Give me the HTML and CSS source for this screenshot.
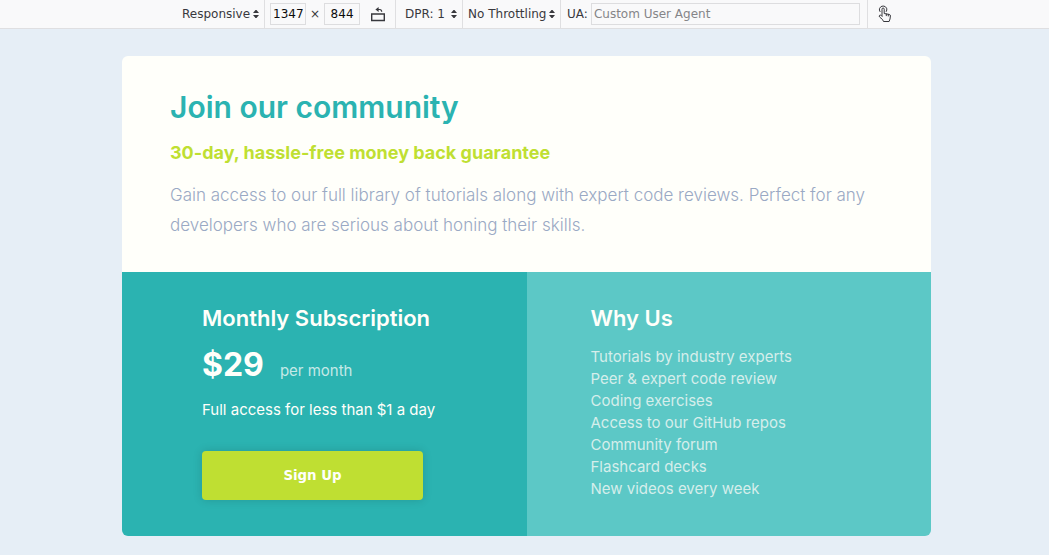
FILE: index.html
```html
<!DOCTYPE html>
<html lang="en">
<head>
<meta charset="utf-8">
<meta name="viewport" content="width=device-width, initial-scale=1">
<title>Join our community</title>
<link rel="stylesheet" href="styles.css">
</head>
<body>
<header class="toolbar">
  <div class="group device">
    <select class="picker picker-device" aria-label="Device"><option>Responsive</option></select>
    <svg class="arrows" viewBox="0 0 6 8" aria-hidden="true"><path d="M0 3 2.500 0h1L6 3zM0 5l2.500 3h1L6 5z"/></svg>
  </div>
  <div class="group size">
    <input class="field dimension" aria-label="Width" value="1347">
    <span class="times">×</span>
    <input class="field dimension" aria-label="Height" value="844">
    <button class="icon-button rotate" aria-label="Rotate viewport">
      <svg width="16" height="16" viewBox="0 0 16 16" fill="none" stroke="#38383d"><path d="M1.700 8h12.600v6.500H1.700z" stroke-width="1.400"/><path d="M7 3.500h2.700q2 0 2 2.300" stroke-width="1.200"/><path d="M8.600 1v5L5.400 3.500z" fill="#38383d" stroke="none"/></svg>
    </button>
  </div>
  <div class="group ratio">
    <select class="picker picker-ratio" aria-label="Device pixel ratio"><option>DPR: 1</option></select>
    <svg class="arrows" viewBox="0 0 6 8" aria-hidden="true"><path d="M0 3 2.500 0h1L6 3zM0 5l2.500 3h1L6 5z"/></svg>
  </div>
  <div class="group network">
    <select class="picker picker-network" aria-label="Throttling"><option>No Throttling</option></select>
    <svg class="arrows" viewBox="0 0 6 8" aria-hidden="true"><path d="M0 3 2.500 0h1L6 3zM0 5l2.500 3h1L6 5z"/></svg>
  </div>
  <div class="group agent">
    <label for="agent">UA:</label>
    <input class="field agent-field" id="agent" placeholder="Custom User Agent">
  </div>
  <div class="group touch">
    <button class="icon-button" aria-label="Touch simulation">
      <svg width="16" height="18" viewBox="0 0 16 18" fill="none" stroke="#38383d" stroke-linecap="round" stroke-linejoin="round"><path d="M5 11V4.200q0-1.200 1.100-1.200t1.100 1.200V8.500l5 .9q1.300.3 1.200 1.600l-.4 3-.9 2.500H6.500L5.500 14.500 2.600 12q-.9-1 0-1.700.9-.5 1.700.2L5 11.200M9.300 9v1.700M11.300 9.400v1.600"/><path d="M3 6.600Q1.900 5 2.600 3.300 3.700 1 6.100 1t3.500 2.200q.7 1.700-.3 3.300"/></svg>
    </button>
  </div>
</header>
<main class="card">
  <section class="intro">
    <h1 class="title">Join our community</h1>
    <h2 class="guarantee">30-day, hassle-free money back guarantee</h2>
    <p class="summary">Gain access to our full library of tutorials along with expert code reviews. Perfect for any developers who are serious about honing their skills.</p>
  </section>
  <div class="details">
    <section class="plan">
      <h2 class="heading">Monthly Subscription</h2>
      <p class="price"><strong class="amount">$29</strong><span class="period">per month</span></p>
      <p class="note">Full access for less than $1 a day</p>
      <button class="signup">Sign Up</button>
    </section>
    <section class="reasons">
      <h2 class="heading">Why Us</h2>
      <ul class="list">
        <li>Tutorials by industry experts</li>
        <li>Peer &amp; expert code review</li>
        <li>Coding exercises</li>
        <li>Access to our GitHub repos</li>
        <li>Community forum</li>
        <li>Flashcard decks</li>
        <li>New videos every week</li>
      </ul>
    </section>
  </div>
</main>
</body>
</html>
```
FILE: styles.css
```css
* {
  box-sizing: border-box;
}

body {
  margin: 0;
  background: #e6eef6;
  font-family: Inter, Roboto, sans-serif;
}

h1, h2, p, ul {
  margin: 0;
  padding: 0;
}

.toolbar {
  display: flex;
  justify-content: center;
  height: 29px;
  padding-right: 151px;
  padding-left: 177px;
  background: #f9f9fa;
  border-bottom: 1px solid #dfdfe1;
  color: #38383d;
  font: 12px/16px "DejaVu Sans", sans-serif;
}

.group {
  display: flex;
  flex: none;
  align-items: center;
  padding: 0 5px;
  border-right: 1px solid #dfdfe1;
}

.group.agent {
  flex: 1;
  gap: 3px;
  padding-right: 7px;
  padding-left: 6px;
}

.group.touch {
  border-right: 0;
}

.size {
  gap: 4px;
}

.group.ratio {
  padding-left: 9px;
}

.picker {
  appearance: none;
  margin: 0;
  padding: 0;
  border: 0;
  background: none;
  color: inherit;
  font: inherit;
}

.picker-device {
  width: 71px;
}

.picker-ratio {
  width: 46px;
}

.picker-network {
  width: 81px;
}

.arrows {
  width: 6px;
  height: 8px;
  fill: #38383d;
  pointer-events: none;
}

.field {
  height: 22px;
  min-width: 0;
  padding: 0 2px;
  border: 1px solid #dddddf;
  background: #f9f9fa;
  color: #0c0c0d;
  font: inherit;
}

.field::placeholder {
  color: #858588;
}

.dimension {
  width: 36px;
  text-align: center;
}

.agent-field {
  flex: 1;
}

.icon-button {
  display: flex;
  padding: 0;
  border: 0;
  background: none;
}

.rotate {
  margin: 0 4px 0 6px;
}

.touch .icon-button {
  margin-left: 4px;
}

.card {
  margin: 27px 118px 19px 122px;
  overflow: hidden;
  border-radius: 6px;
}

.intro {
  padding: 32px 48px;
  background: #fffffa;
}

.title {
  color: #2bb3b1;
  font-size: 30px;
  font-weight: 600;
  line-height: 38px;
}

.guarantee {
  margin-top: 14px;
  color: #bfdf32;
  font-size: 18px;
  font-weight: 700;
  line-height: 26px;
}

.summary {
  margin-top: 14px;
  color: #9aa9c4;
  font-size: 17px;
  font-weight: 300;
  line-height: 30px;
}

.details {
  display: grid;
  grid-template-columns: 1fr 1fr;
  min-height: 264px;
  color: #fffffa;
}

.plan {
  padding: 32px 80px 36px;
  background: #2bb3b1;
}

.reasons {
  padding: 32px 64px;
  background: #5cc8c6;
}

.heading {
  font-size: 22px;
  font-weight: 600;
  line-height: 28px;
}

.price {
  display: flex;
  align-items: baseline;
  gap: 16px;
  margin-top: 12px;
}

.amount {
  font-size: 32px;
  font-weight: 700;
  line-height: 42px;
}

.period {
  color: #c5e9e7;
  font-size: 15px;
}

.note {
  margin-top: 12px;
  font-size: 15px;
  line-height: 24px;
}

.signup {
  width: 221px;
  height: 49px;
  margin-top: 29px;
  border: 0;
  border-radius: 4px;
  background: #bfdf32;
  box-shadow: 0 0 10px rgb(0 0 0 / 15%);
  color: #fffffa;
  font-family: "DejaVu Sans", sans-serif;
  font-weight: bold;
}

.list {
  margin-top: 14px;
  color: #d5eeeb;
  font-size: 15px;
  line-height: 22px;
  list-style: none;
}
```
